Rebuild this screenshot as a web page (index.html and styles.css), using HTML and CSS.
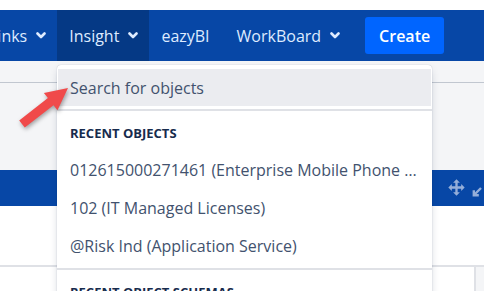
FILE: index.html
```html
<!DOCTYPE html>
<html>
<head>
<meta charset="utf-8">
<link rel="stylesheet" href="styles.css">
</head>
<body>
<div class="topstrip"></div>
<nav class="nav">
  <div class="nav-list">
    <div class="nav-item">Links <svg class="chev" viewBox="0 0 10 7"><path d="M1.5 1.5 L5 5 L8.5 1.5" /></svg></div>
    <div class="nav-item active">Insight <svg class="chev" viewBox="0 0 10 7"><path d="M1.5 1.5 L5 5 L8.5 1.5" /></svg></div>
    <div class="nav-item plain">eazyBI</div>
    <div class="nav-item">WorkBoard <svg class="chev" viewBox="0 0 10 7"><path d="M1.5 1.5 L5 5 L8.5 1.5" /></svg></div>
    <div class="create">Create</div>
  </div>
</nav>
<main class="page">
  <div class="page-head"></div>
  <div class="page-sub"></div>
  <div class="bluebar">
    <svg class="move" viewBox="0 0 16 16"><path d="M8 0.3 L11.2 3.6 H9.1 V6.9 H12.4 V4.8 L15.7 8 L12.4 11.2 V9.1 H9.1 V12.4 H11.2 L8 15.7 L4.8 12.4 H6.9 V9.1 H3.6 V11.2 L0.3 8 L3.6 4.8 V6.9 H6.9 V3.6 H4.8 Z"/></svg>
    <svg class="shrink" viewBox="0 0 10 10"><path d="M9 1 L3 7 M1.8 3.2 V8.2 H6.8" /></svg>
  </div>
  <div class="white-area"></div>
  <div class="bottom-area"><div class="bottom-right"></div></div>

  <div class="dropdown">
    <div class="search-wrap"><div class="search">Search for objects</div></div>
    <div class="section">
      <div class="heading">RECENT OBJECTS</div>
      <div class="item">012615000271461 (Enterprise Mobile Phone Devices)</div>
      <div class="item">102 (IT Managed Licenses)</div>
      <div class="item">@Risk Ind (Application Service)</div>
    </div>
    <div class="section">
      <div class="heading">RECENT OBJECT SCHEMAS</div>
    </div>
  </div>

  <svg class="arrow" viewBox="0 0 60 50"><path d="M53 7 L42.5 29.3 L38.5 24.2 L9.8 46.5 L4.2 39.5 L32.9 17.1 L28.9 11.9 Z" /></svg>
</main>
</body>
</html>
```

FILE: styles.css
```css
html, body { margin: 0; padding: 0; }
body {
  width: 484px;
  height: 291px;
  overflow: hidden;
  font-family: "Open Sans", "Noto Sans", sans-serif;
  background: #fff;
}
.topstrip { height: 10px; background: #fff; }
.nav {
  height: 51px;
  background: #0747a6;
  overflow: hidden;
}
.nav-list {
  display: flex;
  align-items: center;
  height: 100%;
  margin-left: -23px;
}
.nav-item {
  display: flex;
  align-items: center;
  height: 100%;
  padding: 0 11px 0 12px;
  color: #deebff;
  font-size: 16px;
  gap: 9px;
  white-space: nowrap;
}
.nav-item.plain { padding-right: 15px; }
.nav-item.active { background: #053985; }
.chev { width: 10px; height: 7px; fill: none; stroke: #deebff; stroke-width: 2.6; stroke-linecap: round; stroke-linejoin: round; }
.create {
  margin-left: 14px;
  background: #0065ff;
  color: #fff;
  font-size: 16px;
  font-weight: 600;
  height: 37px;
  width: 79px;
  display: flex;
  align-items: center;
  justify-content: center;
  border-radius: 3px;
}
.page { position: relative; }
.page-head { height: 21px; background: #f4f5f7; border-bottom: 1px solid #c1c7d0; }
.page-sub { height: 87px; background: #f4f5f7; }
.bluebar {
  height: 36px;
  background: #0747a6;
  display: flex;
  align-items: center;
  justify-content: flex-end;
  gap: 7px;
}
.move { width: 17px; height: 17px; fill: #94aed9; margin-top: -2px; }
.shrink { width: 10px; height: 10px; fill: none; stroke: #94aed9; stroke-width: 2.4; margin-top: 8px; margin-right: 2px; }
.white-area { height: 59px; background: #fff; border-bottom: 2px solid #dfe1e6; }
.bottom-area { height: 40px; display: flex; justify-content: flex-end; }
.bottom-right { width: 8px; background: #f4f5f7; border-left: 2px solid #dfe1e6; }
.dropdown {
  position: absolute;
  left: 57px;
  top: 4px;
  width: 375px;
  height: 240px;
  background: #fff;
  border-radius: 4px;
  box-shadow: 0 4px 8px -2px rgba(9,30,66,.25), 0 0 1px rgba(9,30,66,.31);
}
.search-wrap { padding: 4px 1px 3px; border-bottom: 2px solid #dfe1e6; }
.search {
  height: 37px;
  background: #ebecf0;
  padding-left: 12px;
  display: flex;
  align-items: center;
  color: #42526e;
  font-size: 16px;
}
.section { padding-bottom: 3px; border-bottom: 2px solid #dfe1e6; }
.heading {
  padding: 14px 13px 0;
  line-height: 16px;
  font-size: 13px;
  font-weight: 700;
  color: #172b4d;
  margin-bottom: 10px;
}
.item {
  height: 38px;
  line-height: 38px;
  padding: 0 13px;
  color: #42526e;
  font-size: 16px;
  white-space: nowrap;
  overflow: hidden;
  text-overflow: ellipsis;
}
.arrow {
  position: absolute;
  left: 15px;
  top: 20px;
  width: 60px;
  height: 50px;
  fill: #f04a4a;
  filter: drop-shadow(1px 2px 2px rgba(0,0,0,.35));
}
```
